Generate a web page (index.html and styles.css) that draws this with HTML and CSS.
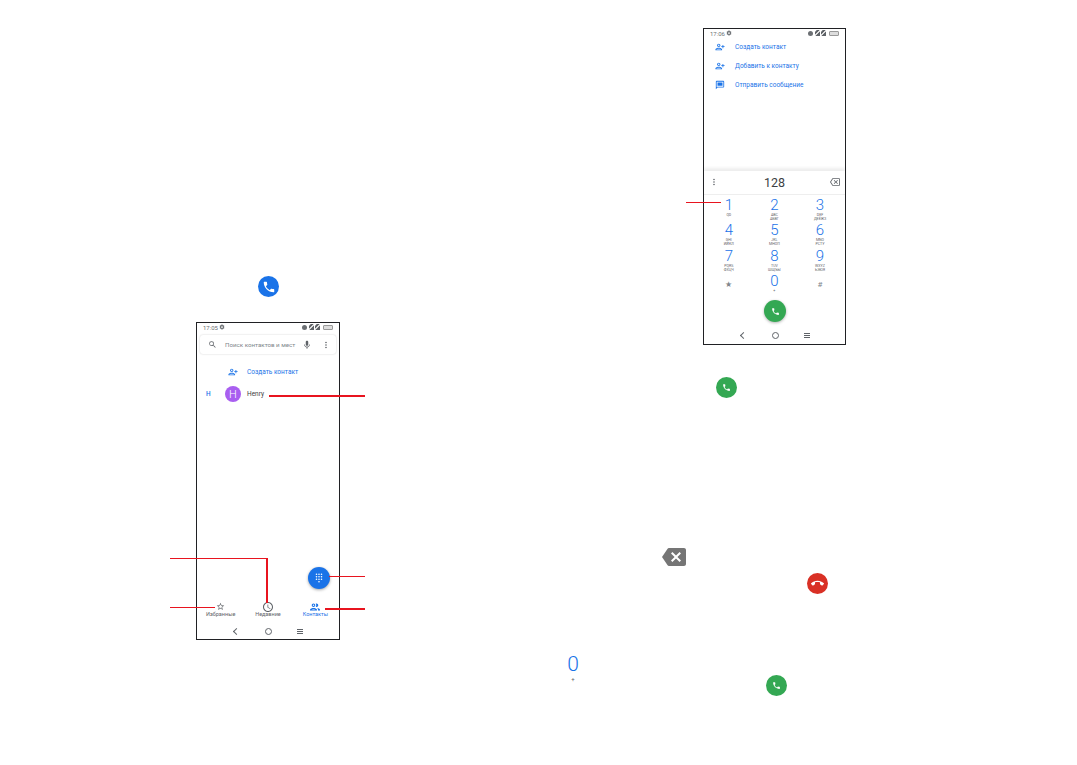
FILE: index.html
```html
<!DOCTYPE html>
<html lang="en">
<head>
    <meta charset="UTF-8">
    <title>Телефон</title>
    <link rel="stylesheet" href="styles.css">
</head>
<body>
    <svg class="defs" width="0" height="0">
        <symbol id="i-call" viewBox="0 0 24 24"><path d="M6.62 10.79c1.44 2.83 3.76 5.14 6.59 6.59l2.2-2.2c.27-.27.67-.36 1.02-.24 1.12.37 2.33.57 3.57.57.55 0 1 .45 1 1V20c0 .55-.45 1-1 1-9.39 0-17-7.61-17-17 0-.55.45-1 1-1h3.5c.55 0 1 .45 1 1 0 1.25.2 2.45.57 3.57.11.35.03.74-.25 1.02l-2.2 2.2z"/></symbol>
        <symbol id="i-end" viewBox="0 0 24 24"><path d="M12 9c-1.6 0-3.15.25-4.6.72v3.1c0 .39-.23.74-.56.9-.98.49-1.87 1.12-2.66 1.85-.18.18-.43.28-.7.28-.28 0-.53-.11-.71-.29L.29 13.08c-.18-.17-.29-.42-.29-.7 0-.28.11-.53.29-.71C3.34 8.78 7.46 7 12 7s8.66 1.78 11.71 4.67c.18.18.29.43.29.71 0 .28-.11.53-.29.71l-2.48 2.48c-.18.18-.43.29-.71.29-.27 0-.52-.11-.7-.28-.79-.74-1.69-1.36-2.67-1.85-.33-.16-.56-.5-.56-.9v-3.1C15.15 9.25 13.6 9 12 9z"/></symbol>
        <symbol id="i-add" viewBox="0 0 24 24"><path d="M9 12c2.21 0 4-1.79 4-4s-1.79-4-4-4-4 1.790-4 4 1.790 4 4 4zm0-6c1.100 0 2 .9 2 2s-.9 2-2 2-2-.9-2-2 .9-2 2-2zm0 8c-2.670 0-8 1.340-8 4v2h16v-2c0-2.660-5.330-4-8-4zm-6 4c.2-.71 3.300-2 6-2 2.690 0 5.780 1.280 6 2H3zm17-3v-3h3v-2h-3V7h-2v3h-3v2h3v3z"/></symbol>
        <symbol id="i-msg" viewBox="0 0 24 24"><path d="M20 2H4c-1.100 0-2 .9-2 2v18l4-4h14c1.100 0 2-.9 2-2V4c0-1.100-.9-2-2-2zm0 14H5.200L4 17.200V4h16v12zM6 6h12v8H6z"/></symbol>
        <symbol id="i-back" viewBox="0 0 24 24"><path d="M22 3H7c-.69 0-1.23.35-1.59.88L0 12l5.41 8.11c.36.53.9.89 1.59.89h15c1.1 0 2-.9 2-2V5c0-1.1-.9-2-2-2zm-3 12.59L17.59 17 14 13.41 10.41 17 9 15.59 12.59 12 9 8.41 10.41 7 14 10.59 17.59 7 19 8.41 15.41 12 19 15.59z"/></symbol>
        <symbol id="i-backline" viewBox="0 0 24 24"><path d="M22 3H7c-.69 0-1.23.35-1.59.88L0 12l5.41 8.11c.36.53.9.89 1.59.89h15c1.1 0 2-.9 2-2V5c0-1.1-.9-2-2-2zm0 16H7.07L2.4 12l4.66-7H22v14zm-11.59-2L14 13.41 17.59 17 19 15.59 15.41 12 19 8.41 17.59 7 14 10.59 10.41 7 9 8.41 12.59 12 9 15.59z"/></symbol>
        <symbol id="i-search" viewBox="0 0 24 24"><path d="M15.5 14h-.79l-.28-.27A6.47 6.47 0 0 0 16 9.5 6.5 6.5 0 1 0 9.5 16c1.61 0 3.09-.59 4.23-1.57l.27.28v.79l5 4.99L20.49 19l-4.99-5zm-6 0C7.01 14 5 11.99 5 9.5S7.01 5 9.5 5 14 7.01 14 9.5 11.99 14 9.5 14z"/></symbol>
        <symbol id="i-mic" viewBox="0 0 24 24"><path d="M12 14c1.66 0 3-1.34 3-3V5c0-1.66-1.34-3-3-3S9 3.34 9 5v6c0 1.66 1.34 3 3 3zm5.3-3c0 3-2.54 5.1-5.3 5.1S6.7 14 6.7 11H5c0 3.41 2.72 6.23 6 6.72V21h2v-3.28c3.28-.48 6-3.3 6-6.72h-1.7z"/></symbol>
        <symbol id="i-star" viewBox="0 0 24 24"><path d="M22 9.24l-7.19-.62L12 2 9.19 8.63 2 9.24l5.46 4.73L5.82 21 12 17.27 18.18 21l-1.63-7.03L22 9.24zM12 15.4l-3.76 2.27 1-4.28-3.32-2.88 4.38-.38L12 6.1l1.71 4.04 4.38.38-3.32 2.88 1 4.28L12 15.4z"/></symbol>
        <symbol id="i-clock" viewBox="0 0 24 24"><path d="M11.99 2C6.47 2 2 6.48 2 12s4.47 10 9.99 10C17.52 22 22 17.52 22 12S17.52 2 11.99 2zM12 20c-4.42 0-8-3.58-8-8s3.58-8 8-8 8 3.58 8 8-3.58 8-8 8zm.5-13H11v6l5.25 3.15.75-1.23-4.5-2.67z"/></symbol>
        <symbol id="i-people" viewBox="0 0 24 24"><path d="M9 12c1.93 0 3.5-1.57 3.5-3.5S10.93 5 9 5 5.5 6.57 5.5 8.5 7.07 12 9 12zm0-5c.83 0 1.5.67 1.5 1.5S9.83 10 9 10s-1.5-.67-1.5-1.5S8.17 7 9 7zm0 6.75c-2.34 0-7 1.17-7 3.5V19h14v-1.75c0-2.33-4.66-3.5-7-3.5zM4.34 17c.84-.58 2.87-1.25 4.66-1.25s3.82.67 4.66 1.25H4.34zM16.04 13.81c1.16.84 1.96 1.96 1.96 3.44V19h4v-1.75c0-2.02-3.5-3.17-5.96-3.44zM15 12c1.93 0 3.5-1.57 3.5-3.5S16.93 5 15 5c-.54 0-1.04.13-1.5.35.63.89 1 1.98 1 3.15s-.37 2.26-1 3.15c.46.22.96.35 1.5.35z"/></symbol>
        <symbol id="i-dots" viewBox="0 0 24 24"><path d="M12 8c1.1 0 2-.9 2-2s-.9-2-2-2-2 .9-2 2 .9 2 2 2zm0 2c-1.1 0-2 .9-2 2s.9 2 2 2 2-.9 2-2-.9-2-2-2zm0 6c-1.1 0-2 .9-2 2s.9 2 2 2 2-.9 2-2-.9-2-2-2z"/></symbol>
        <symbol id="i-gear" viewBox="0 0 24 24"><path d="M19.4 13c.04-.33.06-.66.06-1s-.02-.67-.06-1l2.1-1.65c.2-.15.25-.42.12-.64l-2-3.46c-.12-.22-.39-.3-.61-.22l-2.49 1c-.52-.4-1.08-.73-1.69-.98l-.38-2.65A.49.49 0 0 0 14 2h-4c-.25 0-.46.18-.49.42l-.38 2.65c-.61.25-1.17.59-1.69.98l-2.49-1c-.23-.09-.49 0-.61.22l-2 3.46c-.13.22-.07.49.12.64L4.56 11c-.04.33-.06.67-.06 1s.02.67.06 1l-2.1 1.65c-.2.15-.25.42-.12.64l2 3.46c.12.22.39.3.61.22l2.49-1c.52.4 1.08.73 1.69.98l.38 2.65c.03.24.24.42.49.42h4c.25 0 .46-.18.49-.42l.38-2.65c.61-.25 1.17-.59 1.69-.98l2.49 1c.23.09.49 0 .61-.22l2-3.46c.12-.22.07-.49-.12-.64L19.4 13zM12 15.5a3.5 3.5 0 1 1 0-7 3.5 3.5 0 0 1 0 7z"/></symbol>
        <symbol id="i-grid" viewBox="0 0 24 24"><path d="M12 19c-1.1 0-2 .9-2 2s.9 2 2 2 2-.9 2-2-.9-2-2-2zM6 1C4.900 1 4 1.900 4 3s.9 2 2 2 2-.9 2-2-.9-2-2-2zm0 6c-1.100 0-2 .9-2 2s.9 2 2 2 2-.9 2-2-.9-2-2-2zm0 6c-1.100 0-2 .9-2 2s.9 2 2 2 2-.9 2-2-.9-2-2-2zm12-8c1.100 0 2-.9 2-2s-.9-2-2-2-2 .9-2 2 .9 2 2 2zm-6 8c-1.100 0-2 .9-2 2s.9 2 2 2 2-.9 2-2-.9-2-2-2zm6 0c-1.100 0-2 .9-2 2s.9 2 2 2 2-.9 2-2-.9-2-2-2zm0-6c-1.100 0-2 .9-2 2s.9 2 2 2 2-.9 2-2-.9-2-2-2zm-6 0c-1.100 0-2 .9-2 2s.9 2 2 2 2-.9 2-2-.9-2-2-2zm0-6c-1.100 0-2 .9-2 2s.9 2 2 2 2-.9 2-2-.9-2-2-2z"/></symbol>
    </svg>

    <!-- loose icons on the manual page -->
    <span class="round round-blue at-call"><svg class="ico"><use href="#i-call"/></svg></span>
    <span class="round round-green at-green1"><svg class="ico"><use href="#i-call"/></svg></span>
    <span class="round round-red at-red"><svg class="ico"><use href="#i-end"/></svg></span>
    <span class="round round-green at-green2"><svg class="ico"><use href="#i-call"/></svg></span>
    <svg class="big-back"><use href="#i-back"/></svg>
    <div class="big-zero"><span class="big-digit">0</span><span class="big-plus">+</span></div>

    <!-- contacts screen -->
    <div class="phone phone-contacts">
        <div class="status">
            <span class="status-time">17:05</span>
            <svg class="status-gear"><use href="#i-gear"/></svg>
            <span class="status-right"><i class="vib"></i><i class="sim"></i><i class="sim"></i><i class="batt"></i></span>
        </div>
        <div class="search">
            <svg class="search-ico"><use href="#i-search"/></svg>
            <span class="search-text">Поиск контактов и мест</span>
            <svg class="search-mic"><use href="#i-mic"/></svg>
            <svg class="search-dots"><use href="#i-dots"/></svg>
        </div>
        <div class="create-row">
            <svg class="add-ico"><use href="#i-add"/></svg>
            <span>Создать контакт</span>
        </div>
        <div class="contact-row">
            <span class="contact-letter">H</span>
            <span class="avatar">H</span>
            <span class="contact-name">Henry</span>
        </div>
        <div class="spacer"></div>
        <div class="fab-row"><span class="fab"><svg class="ico"><use href="#i-grid"/></svg></span></div>
        <div class="tabs">
            <div class="tab"><svg><use href="#i-star"/></svg><span>Избранные</span></div>
            <div class="tab tab-big"><svg><use href="#i-clock"/></svg><span>Недавние</span></div>
            <div class="tab tab-big tab-on"><svg><use href="#i-people"/></svg><span>Контакты</span></div>
        </div>
        <div class="navbar"><i class="nav-back"></i><i class="nav-home"></i><i class="nav-menu"></i></div>
    </div>

    <!-- dialer screen -->
    <div class="phone phone-dialer">
        <div class="status">
            <span class="status-time">17:06</span>
            <svg class="status-gear"><use href="#i-gear"/></svg>
            <span class="status-right"><i class="vib"></i><i class="sim"></i><i class="sim"></i><i class="batt"></i></span>
        </div>
        <div class="action"><svg class="add-ico"><use href="#i-add"/></svg><span>Создать контакт</span></div>
        <div class="action"><svg class="add-ico"><use href="#i-add"/></svg><span>Добавить к контакту</span></div>
        <div class="action"><svg class="add-ico"><use href="#i-msg"/></svg><span>Отправить сообщение</span></div>
        <div class="spacer"></div>
        <div class="number-bar">
            <svg class="number-dots"><use href="#i-dots"/></svg>
            <span class="number">128</span>
            <svg class="number-back"><use href="#i-backline"/></svg>
        </div>
        <div class="keypad">
            <div class="key"><b>1</b><small>QD</small></div>
            <div class="key"><b>2</b><small>ABC<br>АБВГ</small></div>
            <div class="key"><b>3</b><small>DEF<br>ДЕЁЖЗ</small></div>
            <div class="key"><b>4</b><small>GHI<br>ИЙКЛ</small></div>
            <div class="key"><b>5</b><small>JKL<br>МНОП</small></div>
            <div class="key"><b>6</b><small>MNO<br>РСТУ</small></div>
            <div class="key"><b>7</b><small>PQRS<br>ФХЦЧ</small></div>
            <div class="key"><b>8</b><small>TUV<br>ШЩЪЫ</small></div>
            <div class="key"><b>9</b><small>WXYZ<br>ЬЭЮЯ</small></div>
            <div class="key key-sym">★</div>
            <div class="key"><b>0</b><small>+</small></div>
            <div class="key key-sym">#</div>
        </div>
        <div class="call-row"><span class="round round-green round-shadow"><svg class="ico"><use href="#i-call"/></svg></span></div>
        <div class="navbar navbar-dialer"><i class="nav-back"></i><i class="nav-home"></i><i class="nav-menu"></i></div>
    </div>

    <!-- red callout lines -->
    <div class="line line-henry"></div>
    <div class="line line-recent-h"></div>
    <div class="line line-recent-v"></div>
    <div class="line line-fav"></div>
    <div class="line line-fab"></div>
    <div class="line line-contacts"></div>
    <div class="line line-key"></div>
</body>
</html>
```

FILE: styles.css
```css
html, body {
    margin: 0;
    padding: 0;
    background: #fff;
}

body {
    position: relative;
    width: 1077px;
    height: 765px;
    overflow: hidden;
    font-family: Roboto, "Liberation Sans", sans-serif;
    color: #5f6368;
}

.defs {
    position: absolute;
}

svg {
    fill: currentColor;
    display: block;
}

/* round icon buttons */
.round {
    position: absolute;
    width: 21px;
    height: 21px;
    border-radius: 50%;
    display: flex;
    align-items: center;
    justify-content: center;
    color: #fff;
}

.ico {
    width: 9px;
    height: 9px;
}

.round-blue { background: #1a73e8; }
.round-green { background: #34a853; }
.round-red { background: #d93025; }

.at-call { left: 258px; top: 276px; }
.at-call .ico { width: 14px; height: 14px; }
.at-green1 { left: 716px; top: 377px; }
.at-red { left: 807px; top: 573px; }
.at-red .ico { width: 13px; height: 13px; }
.at-green2 { left: 766px; top: 675px; }

.big-back {
    position: absolute;
    left: 662px;
    top: 545px;
    width: 24px;
    height: 24px;
    color: #757575;
}

.big-zero {
    position: absolute;
    left: 563px;
    top: 654px;
    width: 20px;
    display: flex;
    flex-direction: column;
    align-items: center;
}

.big-digit {
    font-size: 21px;
    font-weight: 300;
    line-height: 21px;
    color: #1a73e8;
}

.big-plus {
    font-size: 6px;
    line-height: 7px;
    color: #5f6368;
}

/* phones */
.phone {
    position: absolute;
    box-sizing: border-box;
    width: 144px;
    height: 318px;
    border: 1px solid #202124;
    background: #fff;
    display: flex;
    flex-direction: column;
}

.phone-contacts { left: 196px; top: 322px; }
.phone-dialer { left: 703px; top: 28px; width: 143px; height: 317px; }

.spacer { flex: 1; }

.status {
    height: 8px;
    padding: 0 6px;
    display: flex;
    align-items: center;
    gap: 1.5px;
    font-size: 6px;
    color: #6b6f73;
}

.status-gear {
    width: 6px;
    height: 6px;
}

.status-right {
    margin-left: auto;
    display: flex;
    align-items: center;
    gap: 1px;
}

.vib {
    width: 5px;
    height: 5px;
    margin-right: 1px;
    border-radius: 50%;
    background: #6b6f73;
}

/* sim card with a light slash for "no signal" */
.sim {
    width: 5px;
    height: 6px;
    background: linear-gradient(135deg, #5f6368 42%, #ddd 42%, #ddd 58%, #5f6368 58%);
    clip-path: polygon(35% 0, 100% 0, 100% 100%, 0 100%, 0 30%);
}

.batt {
    width: 8px;
    height: 3px;
    margin-left: 2px;
    border: 1px solid #999;
    background: #ddd;
    border-radius: 1px;
}

/* contacts screen */
.search {
    margin: 4px 3px 0;
    height: 19px;
    box-sizing: border-box;
    padding: 0 5px 0 8px;
    display: flex;
    align-items: center;
    border-radius: 3px;
    box-shadow: 0 0 2px rgba(0, 0, 0, .2);
    font-size: 6.2px;
    color: #80868b;
}

.search-ico {
    width: 9px;
    height: 9px;
    color: #5f6368;
}

.search-text {
    margin-left: 8px;
    white-space: nowrap;
}

.search-mic {
    width: 10px;
    height: 10px;
    margin-left: auto;
    color: #5f6368;
}

.search-dots {
    width: 10px;
    height: 10px;
    margin-left: 9px;
    color: #5f6368;
}

.add-ico {
    width: 10px;
    height: 10px;
    color: #1a73e8;
    flex: none;
}

.create-row {
    margin-top: 13px;
    padding-left: 31px;
    height: 10px;
    display: flex;
    align-items: center;
    gap: 9px;
    font-size: 6.5px;
    color: #1a73e8;
}

.contact-row {
    margin-top: 9px;
    padding-left: 9px;
    height: 16px;
    display: flex;
    align-items: center;
    font-size: 6.5px;
    color: #3c4043;
}

.contact-letter {
    width: 19px;
    color: #1a73e8;
    font-weight: 500;
}

.avatar {
    width: 16px;
    height: 16px;
    border-radius: 50%;
    background: #a95ff0;
    color: #fff;
    font-size: 11px;
    font-weight: 300;
    display: flex;
    align-items: center;
    justify-content: center;
}

.contact-name {
    margin-left: 6px;
}

.fab-row {
    display: flex;
    justify-content: flex-end;
    padding-right: 9px;
    margin-bottom: 13px;
}

.fab {
    width: 22px;
    height: 22px;
    border-radius: 50%;
    background: #1a73e8;
    color: #fff;
    display: flex;
    align-items: center;
    justify-content: center;
    box-shadow: 0 1px 3px rgba(0, 0, 0, .35);
}

.fab .ico {
    width: 10px;
    height: 10px;
}

.tabs {
    display: flex;
    height: 19px;
}

.tab {
    flex: 1;
    display: flex;
    flex-direction: column;
    align-items: center;
    font-size: 5.5px;
    color: #5f6368;
    white-space: nowrap;
}

.tab svg {
    width: 9px;
    height: 9px;
}

.tab-big svg {
    width: 12px;
    height: 12px;
    margin: -1.5px 0;
}

.tab-on { color: #1a73e8; }

.navbar {
    height: 16px;
    margin-top: 2px;
    padding: 0 36px;
    display: flex;
    align-items: center;
    justify-content: space-between;
}

.nav-back {
    width: 4px;
    height: 4px;
    margin-left: 1px;
    border-left: 1px solid #5f6368;
    border-bottom: 1px solid #5f6368;
    transform: rotate(45deg);
}

.nav-home {
    width: 5px;
    height: 5px;
    border: 1px solid #5f6368;
    border-radius: 50%;
}

.nav-menu {
    width: 6px;
    height: 1px;
    background: #5f6368;
    box-shadow: 0 -2px 0 #5f6368, 0 2px 0 #5f6368;
}

/* dialer screen */
.action {
    height: 19px;
    padding-left: 11px;
    display: flex;
    align-items: center;
    gap: 10px;
    font-size: 6.5px;
    color: #1a73e8;
}

.action:first-of-type { margin-top: 4px; }

.number-bar {
    height: 23px;
    flex: none;
    padding: 0 5px;
    display: flex;
    align-items: center;
    border-bottom: 1px solid #eee;
    box-shadow: 0 -3px 3px rgba(0, 0, 0, .07);
    color: #5f6368;
}

.number-dots {
    width: 10px;
    height: 10px;
}

.number {
    flex: 1;
    text-align: center;
    font-size: 12.5px;
    color: #3c4043;
}

.number-back {
    width: 10px;
    height: 10px;
}

.keypad {
    margin-top: 1px;
    padding: 0 1px 0 2px;
    display: grid;
    grid-template-columns: repeat(3, 45.6px);
    grid-auto-rows: 25.6px;
}

.key {
    display: flex;
    flex-direction: column;
    align-items: center;
    padding-top: 1px;
}

.key b {
    font-size: 15px;
    font-weight: 300;
    line-height: 16px;
    color: #1a73e8;
}

.key small {
    font-size: 3.6px;
    line-height: 4.2px;
    text-align: center;
    color: #5f6368;
}

.key-sym {
    font-size: 8px;
    padding-top: 8px;
    color: #80868b;
}

.call-row {
    height: 26px;
    margin-top: 2px;
    position: relative;
}

.round-shadow {
    left: 60px;
    top: 0;
    width: 22px;
    height: 22px;
    box-shadow: 0 1px 3px rgba(0, 0, 0, .3);
}

.navbar-dialer {
    padding: 0 35px 0 36px;
    height: 18px;
    margin-top: 0;
}

/* callouts */
.line {
    position: absolute;
    background: #e8141f;
}

.line-henry { left: 269px; top: 395px; width: 96px; height: 2px; }
.line-recent-h { left: 170px; top: 558px; width: 98px; height: 1px; }
.line-recent-v { left: 266px; top: 558px; width: 2px; height: 45px; }
.line-fav { left: 170px; top: 607px; width: 45px; height: 1px; }
.line-fab { left: 329px; top: 576px; width: 36px; height: 1px; }
.line-contacts { left: 325px; top: 608px; width: 40px; height: 2px; }
.line-key { left: 686px; top: 202px; width: 35px; height: 1px; }
```
